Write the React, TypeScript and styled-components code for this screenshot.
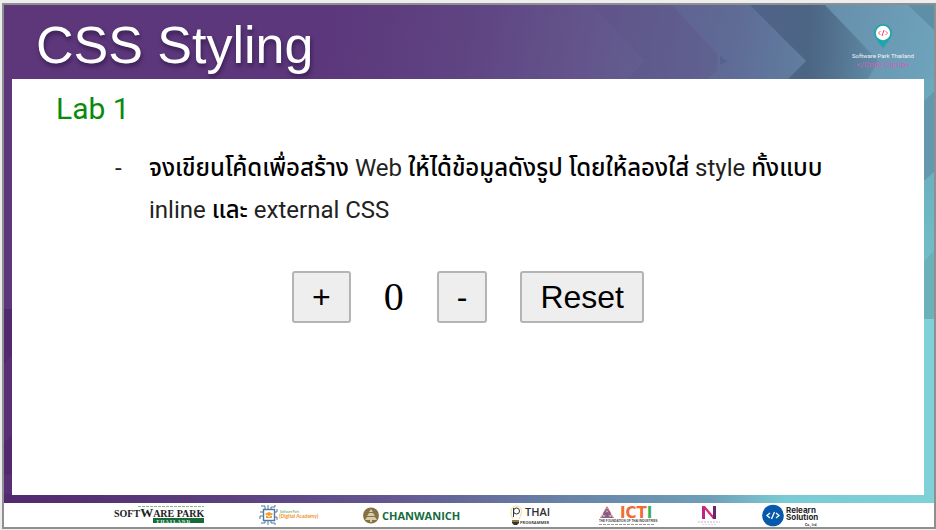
import React, { useState } from "react";
import styled, { createGlobalStyle } from "styled-components";

const GlobalStyle = createGlobalStyle`
  *, *::before, *::after { box-sizing: border-box; }
  html, body, #root { height: 100%; }
  body { margin: 0; background: #ededed; }
`;

const Page = styled.div`
  min-height: 100%;
  display: flex;
  padding: 3px 0 1px 2px;
`;

const Slide = styled.main`
  position: relative;
  isolation: isolate;
  flex: 1;
  display: flex;
  flex-direction: column;
  border: 2px solid #8f8f92;
  font-family: Roboto, "Noto Sans Thai", "Noto Sans", sans-serif;
`;

const Backdrop = styled.svg`
  position: absolute;
  inset: 0;
  width: 100%;
  height: 100%;
  z-index: -1;
`;

const Header = styled.header`
  display: flex;
  align-items: center;
  justify-content: space-between;
  height: 74px;
  padding: 0 20px 0 32px;
`;

const Title = styled.h1`
  margin: 0;
  padding-top: 6px;
  color: #fff;
  font: 400 52px/60px "Liberation Sans", Arial, sans-serif;
  text-shadow: 1px 3px 4px rgba(20, 5, 40, 0.5);
`;

const Camp = styled.div`
  display: flex;
  flex-direction: column;
  align-items: center;
  padding-top: 8px;
  color: #f2f6fa;
  font-size: 6px;
  line-height: 8px;
`;

const CampName = styled.span`
  color: #d45cb4;
  font-size: 8px;
  line-height: 9px;
`;

const Pin = styled.svg`
  width: 18px;
  height: 25px;
  margin-bottom: 3px;
`;

const Card = styled.section`
  flex: 1;
  margin: 0 10px 8px 8px;
  padding: 12px 72px 12px 44px;
  background: #fff;
`;

const LabTitle = styled.h2`
  margin: 0;
  color: #0a8a0a;
  font-size: 30px;
  font-weight: 400;
  line-height: 36px;
`;

const Tasks = styled.ul`
  margin: 20px 0 0;
  padding: 0;
  list-style: none;
`;

const Task = styled.li`
  display: flex;
  padding-left: 59px;
  color: #222;
  font-size: 24px;
  font-weight: 400;
  line-height: 42px;

  &::before {
    content: "-";
    flex: none;
    width: 34px;
  }
`;

const Thai = styled.span`
  color: #000;
  font-weight: 500;
`;

const Counter = styled.div`
  display: flex;
  justify-content: center;
  align-items: center;
  gap: 33px;
  margin: 40px 0 0 28px;
`;

const CounterButton = styled.button`
  height: 52px;
  padding: 0 18px;
  border: 2px solid #b4b4b4;
  border-radius: 3px;
  background: #eee;
  color: #000;
  font: 400 32px/36px "Liberation Sans", Arial, sans-serif;
`;

const Count = styled.output`
  color: #000;
  font: 400 40px/48px "Liberation Serif", "Times New Roman", serif;
`;

const Footer = styled.footer`
  display: flex;
  justify-content: center;
  align-items: center;
  gap: 42px;
  height: 24px;
  padding-right: 5px;
  background: #fff;
`;

const Sponsor = styled.svg<{ $width: number }>`
  flex: none;
  width: ${(p) => p.$width}px;
  height: 24px;
  overflow: visible;
`;

function SlideBackdrop() {
  return (
    <Backdrop viewBox="4 5 930 522" preserveAspectRatio="none" aria-hidden="true">
      <defs>
        <linearGradient id="base" x1="0" x2="1" y1="0" y2="0.1">
          <stop offset="0" stopColor="#5e377b" />
          <stop offset="0.35" stopColor="#5c377b" />
          <stop offset="0.5" stopColor="#5f4482" />
          <stop offset="0.62" stopColor="#63548b" />
          <stop offset="0.78" stopColor="#606a94" />
          <stop offset="0.88" stopColor="#6187a4" />
          <stop offset="1" stopColor="#6ca9bc" />
        </linearGradient>
        <linearGradient id="strip" x1="0" x2="1">
          <stop offset="0" stopColor="#52296e" />
          <stop offset="0.2" stopColor="#5a3c7b" />
          <stop offset="0.4" stopColor="#63548f" />
          <stop offset="0.62" stopColor="#6886a8" />
          <stop offset="0.76" stopColor="#6f9fb8" />
          <stop offset="0.84" stopColor="#7acbd3" />
          <stop offset="1" stopColor="#7dd1d7" />
        </linearGradient>
        <linearGradient id="shade" x1="0" x2="1">
          <stop offset="0" stopColor="#42557a" stopOpacity="0.5" />
          <stop offset="0.45" stopColor="#3e5171" stopOpacity="0.6" />
          <stop offset="1" stopColor="#3e5171" stopOpacity="0.15" />
        </linearGradient>
        <linearGradient id="edge" x1="0" x2="0" y1="0" y2="1">
          <stop offset="0" stopColor="#6db0bf" />
          <stop offset="1" stopColor="#75c5ce" />
        </linearGradient>
      </defs>
      <rect x="4" y="5" width="930" height="522" fill="url(#base)" />
      <path d="M592 5 645 61 628 79H708L717 70V54L672 5Z" fill="#5b4c82" opacity="0.22" />
      <path d="M717 54V70L708 79H788L806 61 750 5H672Z" fill="#5f7099" opacity="0.2" />
      <path d="M720 56 727 61 720 65Z" fill="#4c5583" opacity="0.4" />
      <path d="M750 5 806 61 788 79H868L878 61 825 5Z" fill="url(#shade)" />
      <path d="M825 5 880 61 868 79H934V30L908 5Z" fill="#709bb8" opacity="0.4" />
      <path d="M908 5H934V30Z" fill="#5f8ea7" />
      <path d="M924 101 934 92V180H924Z" fill="#6498ae" />
      <path d="M924 181 934 172V320H924Z" fill="url(#edge)" />
      <path d="M924 261 934 251V320H924Z" fill="#6cb0b9" />
      <rect x="924" y="319" width="10" height="184" fill="#7dd1d7" />
      <rect x="4" y="309" width="8" height="194" fill="#582f74" />
      <path d="M4 309H12V355L4 363ZM4 443 12 435V475H4Z" fill="#51296c" />
      <rect x="4" y="494" width="930" height="10" fill="url(#strip)" />
    </Backdrop>
  );
}

function CampPin() {
  return (
    <Pin viewBox="0 0 18 25" aria-hidden="true">
      <path d="M9 24.500C7 20 0 15 0 9a9 9 0 0 1 18 0c0 6-7 11-9 15.500Z" fill="#20a5aa" />
      <circle cx="9" cy="9" r="7.200" fill="#fff" />
      <path d="M6.500 7 4.500 9l2 2M11.500 7l2 2-2 2" fill="none" stroke="#ee6a43" />
      <path d="m10 6-2 6" stroke="#d43f92" />
    </Pin>
  );
}

function SoftwarePark() {
  return (
    <Sponsor $width={104} viewBox="0 0 104 24" role="img" aria-label="Software Park Thailand">
      <path d="M24 3.500H90" stroke="#7cbd8a" strokeDasharray="3 1" />
      <text x="0" y="14" fontSize="10" fontFamily="Liberation Serif" fontWeight="700" fill="#222">
        SOFT<tspan fontSize="13">W</tspan>ARE PARK
      </text>
      <rect x="39" y="15" width="51" height="5" fill="#146b37" />
      <text x="42" y="19.500" fontSize="5" fontFamily="Liberation Serif" fontWeight="700" fill="#e4f4e8">T H A I L A N D</text>
    </Sponsor>
  );
}

function DigitalAcademy() {
  return (
    <Sponsor $width={61} viewBox="0 0 61 24" role="img" aria-label="Digital Academy">
      <g fill="none" stroke="#4e789f">
        <rect x="3.500" y="6.500" width="11" height="11" strokeWidth="1.400" />
        <path d="M5 6V3H1M8 6V2M11 6V4h4V2M3 9H0M3 13H0v3M5 18v2H1M8 18v4M11 18v2h4v2M15 9h2V6M15 14h2v3" />
      </g>
      <path d="m4.500 11 4.500-2 4.500 2L9 13ZM6 12.500v2.500h6v-2.500L9 14Z" fill="#f39a32" />
      <text x="20" y="10" fontSize="3" fontFamily="Lato" fontWeight="700" fill="#78b87c">Software Park</text>
      <text x="19" y="15" fontSize="5" fontFamily="Lato" fontWeight="900" fill="#f29c38">(Digital Academy)</text>
    </Sponsor>
  );
}

function Chanwanich() {
  return (
    <Sponsor $width={106} viewBox="0 0 106 24" role="img" aria-label="Chanwanich">
      <circle cx="8" cy="12.500" r="8" fill="#857145" />
      <path d="m8 6-2 3h4ZM6 10l-2 3h8l-2-3ZM4 14l-2 3h12l-2-3ZM7 17h2v2H7Z" fill="#d8cda9" />
      <text x="19" y="17" fontSize="11" fontFamily="Open Sans" fontWeight="700" fill="#146b3c">CHANWANICH</text>
    </Sponsor>
  );
}

function ThaiProgrammer() {
  return (
    <Sponsor $width={46} viewBox="0 0 46 24" role="img" aria-label="Thai Programmer">
      <path d="M2 16C-1 11-1 3 5 3s7 6 3 13" fill="none" stroke="#f0dc91" />
      <circle cx="5.500" cy="8" r="3" fill="none" stroke="#333" />
      <path d="M2.500 5v9" stroke="#333" />
      <path d="M1 17h7v3L6 22H3l-2-2Z" fill="#333" />
      <path d="M1 18h7" stroke="#eac14d" />
      <text x="14" y="13" fontSize="11" fontFamily="Open Sans" fontWeight="600" fill="#303030">THAI</text>
      <text x="9" y="21" fontSize="4" fontFamily="Open Sans" fontWeight="700" fill="#444">PROGRAMMER</text>
    </Sponsor>
  );
}

function Icti() {
  return (
    <Sponsor $width={57} viewBox="0 0 57 24" role="img" aria-label="ICTI">
      <path d="m8 3-7 12h14Z" fill="#e65a55" />
      <path d="m8 5-2 4h4ZM4 10l-2 4h4ZM12 10l-2 4h4Z" fill="#fff" />
      <path d="m8 6-5 8h10ZM8 7v7M5 11h6" fill="none" stroke="#4865a8" />
      <text x="21" y="15" fontFamily="DejaVu Sans" fontWeight="700" fontSize="15" fill="#f06b36">
        ICT<tspan fill="#3dae58">I</tspan>
      </text>
      <text x="0" y="19" fontSize="3" fontFamily="Liberation Sans" fontWeight="700" fill="#444">THE FOUNDATION OF THAI INDUSTRIES</text>
      <path d="M0 21.500H56" stroke="#999" strokeDasharray="3 1" />
    </Sponsor>
  );
}

function NLogo() {
  return (
    <Sponsor $width={22} viewBox="0 0 22 24" role="img" aria-label="N">
      <path d="M4 3h3v13H4Z" fill="#b52883" />
      <path d="M4 3h3l11 13h-3Z" fill="#d92b78" />
      <path d="M15 3h3v13h-3Z" fill="#68276d" />
      <path d="M0 19h22" stroke="#c5b8c5" strokeDasharray="2 1" />
      <path d="M4 21.500h14" stroke="#e4dce4" strokeDasharray="2 1" />
    </Sponsor>
  );
}

function Relearn() {
  return (
    <Sponsor $width={58} viewBox="0 0 58 24" role="img" aria-label="Relearn Solution Co., Ltd.">
      <circle cx="11" cy="12.500" r="10.800" fill="#0759ab" />
      <path d="m8 10-3 2.500L8 15M14 10l3 2.500L14 15M12.500 9l-3 7" fill="none" stroke="#fff" strokeWidth="1.300" />
      <g fontFamily="Inter" fontWeight="700" fill="#252525">
        <text x="24" y="10" fontSize="8">Relearn</text>
        <text x="24" y="17" fontSize="8">Solution</text>
        <text x="43" y="22.500" fontSize="3">Co., Ltd.</text>
      </g>
    </Sponsor>
  );
}

export default function App() {
  const [count, setCount] = useState(0);
  return (
    <>
      <GlobalStyle />
      <Page>
        <Slide>
          <SlideBackdrop />
          <Header>
            <Title>CSS Styling</Title>
            <Camp>
              <CampPin />
              <span>Software Park Thailand</span>
              <CampName>&lt;/Code Camp&gt;</CampName>
            </Camp>
          </Header>
          <Card>
            <LabTitle>Lab 1</LabTitle>
            <Tasks>
              <Task>
                <div>
                  <Thai>จงเขียนโค้ดเพื่อสร้าง</Thai> Web <Thai>ให้ได้ข้อมูลดังรูป โดยให้ลองใส่</Thai> style{" "}
                  <Thai>ทั้งแบบ</Thai> inline <Thai>และ</Thai> external CSS
                </div>
              </Task>
            </Tasks>
            <Counter>
              <CounterButton type="button" onClick={() => setCount(count + 1)}>+</CounterButton>
              <Count>{count}</Count>
              <CounterButton type="button" onClick={() => setCount(count - 1)}>-</CounterButton>
              <CounterButton type="button" onClick={() => setCount(0)}>Reset</CounterButton>
            </Counter>
          </Card>
          <Footer>
            <SoftwarePark />
            <DigitalAcademy />
            <Chanwanich />
            <ThaiProgrammer />
            <Icti />
            <NLogo />
            <Relearn />
          </Footer>
        </Slide>
      </Page>
    </>
  );
}
